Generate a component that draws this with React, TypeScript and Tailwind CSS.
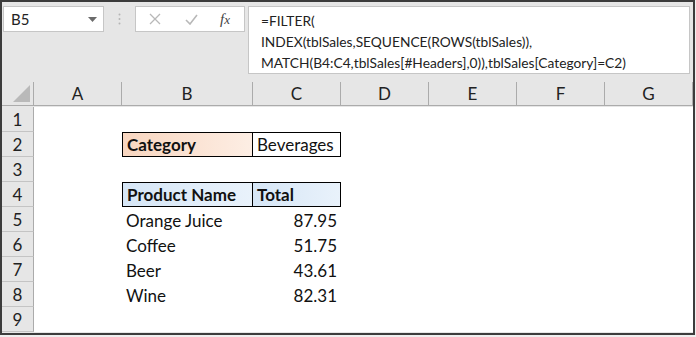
const font = { fontFamily: 'Lato, "Open Sans", sans-serif' };

const cols = ['A', 'B', 'C', 'D', 'E', 'F', 'G'];

type Cell = { text?: string; cls?: string };

const rows: Record<number, Record<string, Cell>> = {
  2: {
    B: {
      text: 'Category',
      cls: 'font-bold border border-black bg-gradient-to-r from-[#f8d6c0] to-[#fdeee4]',
    },
    C: { text: 'Beverages', cls: 'border-y border-r border-black bg-white' },
  },
  4: {
    B: {
      text: 'Product Name',
      cls: 'font-bold border border-black bg-gradient-to-r from-[#d6e6f6] to-[#e9f2fb]',
    },
    C: {
      text: 'Total',
      cls: 'font-bold border-y border-r border-black bg-gradient-to-r from-[#d6e6f6] to-[#e9f2fb]',
    },
  },
  5: { B: { text: 'Orange Juice' }, C: { text: '87.95', cls: 'justify-end' } },
  6: { B: { text: 'Coffee' }, C: { text: '51.75', cls: 'justify-end' } },
  7: { B: { text: 'Beer' }, C: { text: '43.61', cls: 'justify-end' } },
  8: { B: { text: 'Wine' }, C: { text: '82.31', cls: 'justify-end' } },
};

function FormulaBar() {
  return (
    <div className="flex h-[80px] shrink-0 items-start gap-0 pl-px pt-[4px]">
      <div className="relative flex h-[26px] w-[101px] items-center border border-[#c6c6c6] bg-white pl-[7px] pt-px text-[15px] text-[#222]">
        B5
        <svg className="absolute right-[6px] top-[10px]" width="9" height="5" viewBox="0 0 9 5">
          <path d="M0 0h9L4.5 5z" fill="#6b6b6b" />
        </svg>
      </div>
      <div className="flex w-[31px] justify-center pt-[7px]">
        <svg width="3" height="12" viewBox="0 0 3 12">
          <circle cx="1.5" cy="1.5" r="1" fill="#b5b5b5" />
          <circle cx="1.5" cy="6" r="1" fill="#b5b5b5" />
          <circle cx="1.5" cy="10.5" r="1" fill="#b5b5b5" />
        </svg>
      </div>
      <div className="flex h-[26px] w-[110px] items-center border border-[#c6c6c6] bg-white">
        <svg className="ml-[13px]" width="12" height="12" viewBox="0 0 12 12">
          <path d="M1 1l10 10M11 1L1 11" stroke="#b8b8b8" strokeWidth="1.3" />
        </svg>
        <svg className="ml-[24px]" width="13" height="11" viewBox="0 0 13 11">
          <path d="M1 6l4 4 7-9" stroke="#b8b8b8" strokeWidth="1.6" fill="none" />
        </svg>
        <span
          className="ml-[22px] text-[15px] italic text-[#444]"
          style={{ fontFamily: '"Liberation Serif", serif' }}
        >
          f<span className="text-[13px]">x</span>
        </span>
      </div>
      <div className="ml-[3px] mr-[3px] h-[68px] flex-1 border border-[#c6c6c6] bg-white pl-[12px] pt-[3px] text-[13.75px] leading-[21px] text-[#222]">
        <div>=FILTER(</div>
        <div>INDEX(tblSales,SEQUENCE(ROWS(tblSales)),</div>
        <div>MATCH(B4:C4,tblSales[#Headers],0)),tblSales[Category]=C2)</div>
      </div>
    </div>
  );
}

function Grid() {
  return (
    <div className="grid grid-cols-[32px_88px_131px_88px_88px_88px_88px_88px] auto-rows-[25px] text-[17px] text-[#111]">
      <div className="relative h-[24px] border-r border-b border-[#ababab] bg-[#e6e6e6]">
        <svg className="absolute bottom-[3px] right-[3px]" width="17" height="17" viewBox="0 0 17 17">
          <path d="M17 0V17H0z" fill="#b9b9b9" />
        </svg>
      </div>
      {cols.map((c) => (
        <div
          key={c}
          className="flex h-[24px] items-center justify-center border-r border-b border-[#ababab] bg-[#e6e6e6] pt-px text-[#222]"
        >
          {c}
        </div>
      ))}
      {[1, 2, 3, 4, 5, 6, 7, 8, 9].map((r) => (
        <Row key={r} r={r} />
      ))}
    </div>
  );
}

function Row({ r }: { r: number }) {
  const data = rows[r] ?? {};
  return (
    <>
      <div className="flex items-center justify-center border-r border-b border-[#c4c4c4] border-r-[#ababab] bg-[#e6e6e6] pt-[2px] text-[#222]">
        {r}
      </div>
      {cols.map((c) => {
        const cell = data[c];
        return (
          <div
            key={c}
            className={`flex items-end bg-white px-[4px] leading-[22px] ${cell?.cls ?? ''}`}
          >
            {cell?.text}
          </div>
        );
      })}
    </>
  );
}

export default function App() {
  return (
    <div className="h-[337px] w-[696px] overflow-hidden bg-[#efefef]" style={font}>
      <div className="flex h-[335px] w-[695px] flex-col overflow-hidden border-2 border-[#3c3c3c] bg-[#e6e6e6]">
        <FormulaBar />
        <Grid />
      </div>
    </div>
  );
}
